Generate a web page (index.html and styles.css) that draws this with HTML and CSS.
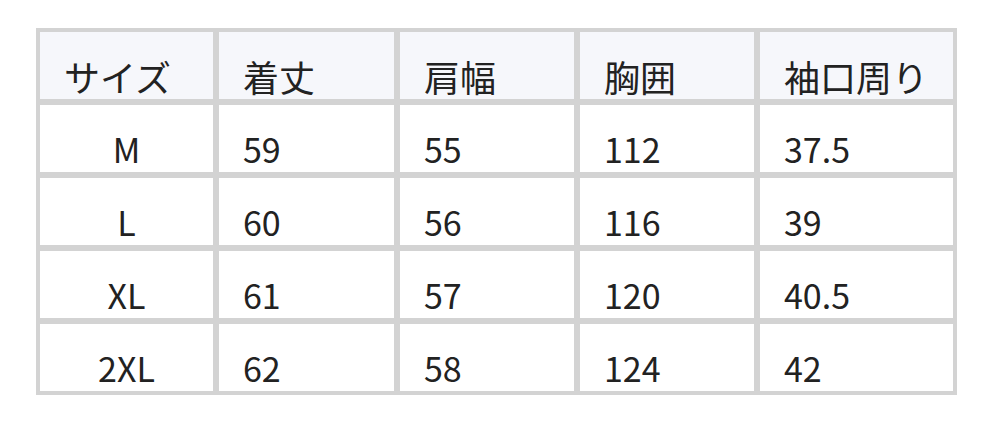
FILE: index.html
```html
<!DOCTYPE html>
<html lang="ja">
<head>
<meta charset="utf-8">
<link rel="stylesheet" href="styles.css">
</head>
<body>
<div class="page">
<table class="size-table">
  <thead>
    <tr>
      <th class="c1">サイズ</th>
      <th class="c2">着丈</th>
      <th class="c3">肩幅</th>
      <th class="c4">胸囲</th>
      <th class="c5">袖口周り</th>
    </tr>
  </thead>
  <tbody>
    <tr><td class="size">M</td><td>59</td><td>55</td><td>112</td><td>37.5</td></tr>
    <tr><td class="size">L</td><td>60</td><td>56</td><td>116</td><td>39</td></tr>
    <tr><td class="size">XL</td><td>61</td><td>57</td><td>120</td><td>40.5</td></tr>
    <tr><td class="size">2XL</td><td>62</td><td>58</td><td>124</td><td>42</td></tr>
  </tbody>
</table>
</div>
</body>
</html>
```

FILE: styles.css
```css
html, body {
  margin: 0;
  padding: 0;
  background: #ffffff;
}

.page {
  padding: 28px 0 0 36px;
}

.size-table {
  width: 921px;
  table-layout: fixed;
  border-collapse: separate;
  border-spacing: 0;
  border: 1px solid #d3d3d3;
  font-family: "Noto Sans CJK JP", "Noto Sans", sans-serif;
  color: #222222;
}

.size-table th,
.size-table td {
  box-sizing: border-box;
  height: 73px;
  border: 3px solid #d3d3d3;
  padding: 20px 10px 0 24px;
  text-align: left;
  vertical-align: middle;
  line-height: 40px;
  white-space: nowrap;
}

.size-table th {
  background: #f6f7fb;
  font-weight: 400;
  font-size: 36px;
}

.size-table td {
  font-size: 34px;
}

.size-table td.size {
  text-align: center;
  padding-left: 10px;
  padding-right: 10px;
}

.c1 { width: 179px; }
.c2 { width: 181px; }
.c3 { width: 180px; }
.c4 { width: 180px; }
.c5 { width: 199px; }
```
